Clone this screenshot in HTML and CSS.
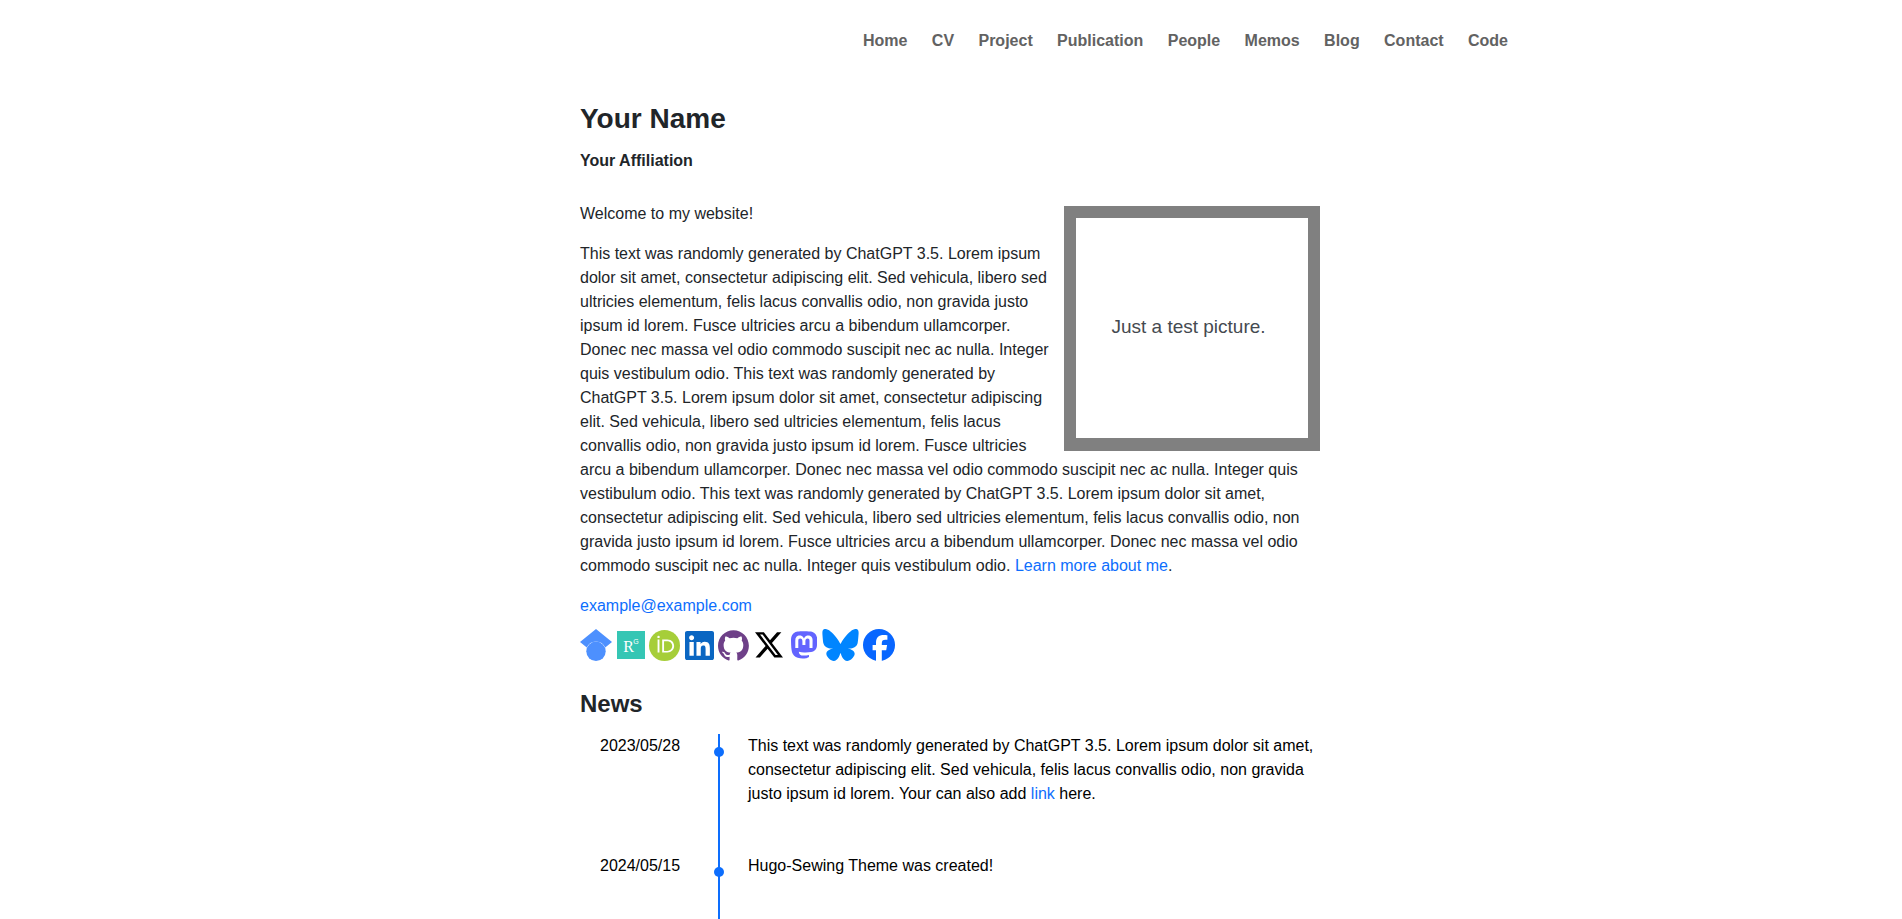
FILE: index.html
```html
<!DOCTYPE html>
<html lang="en">
<head>
<meta charset="utf-8">
<title>Your Name</title>
<link rel="stylesheet" href="styles.css">
</head>
<body>
<nav class="nav">
  <a href="#">Home</a><a href="#">CV</a><a href="#">Project</a><a href="#">Publication</a><a href="#">People</a><a href="#">Memos</a><a href="#">Blog</a><a href="#">Contact</a><a href="#">Code</a>
</nav>
<main class="content">
  <h1 class="name">Your Name</h1>
  <p class="affiliation">Your Affiliation</p>
  <section class="intro">
    <div class="picture">Just a test picture.</div>
    <p>Welcome to my website!</p>
    <p>This text was randomly generated by ChatGPT 3.5. Lorem ipsum dolor sit amet, consectetur adipiscing elit. Sed vehicula, libero sed ultricies elementum, felis lacus convallis odio, non gravida justo ipsum id lorem. Fusce ultricies arcu a bibendum ullamcorper. Donec nec massa vel odio commodo suscipit nec ac nulla. Integer quis vestibulum odio. This text was randomly generated by ChatGPT 3.5. Lorem ipsum dolor sit amet, consectetur adipiscing elit. Sed vehicula, libero sed ultricies elementum, felis lacus convallis odio, non gravida justo ipsum id lorem. Fusce ultricies arcu a bibendum ullamcorper. Donec nec massa vel odio commodo suscipit nec ac nulla. Integer quis vestibulum odio. This text was randomly generated by ChatGPT 3.5. Lorem ipsum dolor sit amet, consectetur adipiscing elit. Sed vehicula, libero sed ultricies elementum, felis lacus convallis odio, non gravida justo ipsum id lorem. Fusce ultricies arcu a bibendum ullamcorper. Donec nec massa vel odio commodo suscipit nec ac nulla. Integer quis vestibulum odio. <a href="#">Learn more about me</a>.</p>
  </section>
  <a class="email" href="#">example@example.com</a>
  <div class="social">
    <svg class="scholar" viewBox="0 0 32 32"><path fill="#4d90fe" d="M16 0 0 13l6.800 5.500a10 10 0 0 1 18.400 0L32 13z"/><circle cx="16" cy="22.300" r="9.700" fill="#4d90fe"/></svg>
    <svg class="gate" viewBox="0 0 28 28"><path fill="#35c6b4" d="M0 0h28v28H0z"/><text x="6.300" y="21.200" font-size="16" fill="#fff">R</text><text class="g" x="16.300" y="12.600" font-size="7" fill="#fff">G</text></svg>
    <svg class="orcid" viewBox="0 0 256 256"><circle cx="128" cy="128" r="128" fill="#a6ce39"/><path fill="#fff" d="M70.900 79.100h15.400v107.100H70.900zM108.900 79.100h41.600c39.600 0 57 28.300 57 53.600 0 27.500-21.500 53.600-56.800 53.600h-41.800zm15.400 93.300h24.500c34.900 0 42.900-26.500 42.900-39.700 0-21.500-13.700-39.700-43.700-39.700h-23.700z"/><circle cx="78.600" cy="56.800" r="10.100" fill="#fff"/></svg>
    <svg class="linkedin" viewBox="0 0 448 448"><path fill="#0a66c2" d="M416 0H31.900C14.300 0 0 14.500 0 32.300v383.400C0 433.500 14.300 448 31.900 448H416c17.600 0 32-14.500 32-32.300V32.300C448 14.500 433.600 0 416 0zM135.400 384H69V170.200h66.500V384zm-33.200-243c-21.300 0-38.500-17.300-38.500-38.500S80.900 64 102.200 64c21.200 0 38.500 17.300 38.500 38.500 0 21.300-17.200 38.500-38.500 38.500zm282.100 243h-66.400V280c0-24.800-.5-56.700-34.500-56.700-34.600 0-39.900 27-39.900 54.900V384h-66.400V170.200h63.700v29.200h.9c8.900-16.800 30.600-34.500 62.900-34.500 67.200 0 79.700 44.300 79.700 101.900z"/></svg>
    <svg class="github" viewBox="0 0 98 97"><path fill="#6e4088" d="M48.854 0C21.839 0 0 22 0 49.217c0 21.756 13.993 40.172 33.405 46.690 2.427.490 3.316-1.059 3.316-2.362 0-1.141-.080-5.052-.080-9.127-13.590 2.934-16.420-5.867-16.420-5.867-2.184-5.704-5.420-7.170-5.420-7.170-4.448-3.015.324-3.015.324-3.015 4.934.326 7.523 5.052 7.523 5.052 4.367 7.496 11.404 5.378 14.235 4.074.404-3.178 1.699-5.378 3.074-6.600-10.839-1.141-22.243-5.378-22.243-24.283 0-5.378 1.940-9.778 5.014-13.200-.485-1.222-2.184-6.275.486-13.038 0 0 4.125-1.304 13.426 5.052a46.970 46.970 0 0 1 12.214-1.630c4.125 0 8.330.571 12.213 1.630 9.302-6.356 13.427-5.052 13.427-5.052 2.670 6.763.970 11.816.485 13.038 3.155 3.422 5.015 7.822 5.015 13.200 0 18.905-11.404 23.060-22.324 24.283 1.780 1.548 3.316 4.481 3.316 9.126 0 6.600-.080 11.897-.080 13.526 0 1.304.890 2.853 3.316 2.364 19.412-6.520 33.405-24.935 33.405-46.691C97.707 22 75.788 0 48.854 0z"/></svg>
    <svg class="x" viewBox="0 0 24 22"><path d="M18.901 0h3.680l-8.040 9.190L24 21.693h-7.406l-5.800-7.584-6.638 7.584H.474l8.600-9.830L0 0h7.594l5.243 6.932zM17.610 19.491h2.039L6.486 2.087H4.298z"/></svg>
    <svg class="mastodon" viewBox="0 0 74 79"><path fill="#6364ff" d="M73.701 17.432C72.562 9.051 65.177 2.447 56.424 1.167 54.947.950 49.351.160 36.389.160h-.097c-12.967 0-15.749.790-17.226 1.007C10.557 2.411 2.787 8.349.902 16.827-.004 21.002-.101 25.631.067 29.877c.239 6.089.285 12.168.844 18.232a85.600 85.600 0 0 0 2.023 11.965c1.797 7.284 9.072 13.346 16.199 15.826a43.900 43.900 0 0 0 23.694 1.236 34 34 0 0 0 2.574-.7c1.917-.603 4.166-1.277 5.819-2.463v-6.150a68 68 0 0 1-15.681 1.818c-9.089 0-11.533-4.262-12.233-6.036a18.700 18.700 0 0 1-1.064-4.760 66.700 66.700 0 0 0 15.424 1.804c1.251 0 2.498 0 3.749-.032 5.231-.146 10.744-.409 15.890-1.403 8.117-1.540 15.842-6.374 16.627-18.613.029-.482.103-5.048.103-5.548.003-1.700.553-12.057-.081-18.421zM61.209 47.968h-8.536V27.271c0-4.357-1.833-6.579-5.562-6.579-4.098 0-6.151 2.625-6.151 7.809v11.310h-8.483v-11.310c0-5.184-2.056-7.809-6.155-7.809-3.707 0-5.559 2.222-5.561 6.579v20.697h-8.528V26.642c0-4.357 1.128-7.818 3.384-10.384 2.328-2.569 5.380-3.887 9.172-3.887 4.387 0 7.703 1.669 9.913 5.004l2.134 3.544 2.137-3.544c2.210-3.335 5.526-5.004 9.907-5.004 3.788 0 6.840 1.318 9.174 3.887 2.256 2.563 3.384 6.024 3.384 10.384z"/></svg>
    <svg class="bluesky" viewBox="10 0 580 512"><path fill="#0085ff" d="M135.720 34.030C202.216 83.951 273.740 185.170 300 239.490c26.262-54.316 97.782-155.540 164.280-205.460C512.260-1.991 590-29.862 590 58.825c0 17.712-10.155 148.790-16.111 170.070-20.703 73.984-96.144 92.854-163.250 81.433 117.300 19.964 147.140 86.092 82.697 152.220-122.390 125.590-175.910-31.511-189.630-71.766-2.514-7.380-3.690-10.832-3.708-7.896-.017-2.936-1.193.516-3.707 7.896-13.714 40.255-67.233 197.360-189.630 71.766-64.444-66.128-34.605-132.260 82.697-152.220-67.108 11.421-142.550-7.449-163.250-81.433C20.150 207.610 9.997 76.535 9.997 58.825c0-88.687 77.742-60.816 125.720-24.795z"/></svg>
    <svg class="facebook" viewBox="0 0 32 32"><circle cx="16" cy="16" r="16" fill="#0866ff"/><path fill="#fff" d="M13 32V21.200H9.600V16H13v-2.100c0-5.500 2.500-8 7.900-8 1 0 2.800.2 3.500.4v4.500c-.4 0-1.100-.1-1.900-.1-2.700 0-3.700 1-3.700 3.700V16h5.300l-.9 5.200h-4.400V32z"/></svg>
  </div>
  <h2 class="news">News</h2>
  <div class="timeline">
    <div class="item"><time>2023/05/28</time><div class="text">This text was randomly generated by ChatGPT 3.5. Lorem ipsum dolor sit amet, consectetur adipiscing elit. Sed vehicula, felis lacus convallis odio, non gravida justo ipsum id lorem. Your can also add <a href="#">link</a> here.</div></div>
    <div class="item"><time>2024/05/15</time><div class="text">Hugo-Sewing Theme was created!</div></div>
  </div>
</main>
</body>
</html>
```

FILE: styles.css
```css
* { box-sizing: border-box; }
body {
  margin: 0;
  background: #fff;
  color: #212529;
  font: 16px/24px "Liberation Sans", Arial, sans-serif;
}
a { color: #0d6efd; text-decoration: none; }
.nav {
  display: flex;
  justify-content: flex-end;
  gap: 24.4px;
  width: 1114px;
  margin: 0 auto;
  padding-top: 29px;
}
.nav a { color: #626262; font-weight: bold; }
.content { width: 740px; margin: 0 auto 0 580px; }
.name { margin: 49px 0 0; font-size: 28px; line-height: 34px; }
.affiliation { margin: 13px 0 29px; font-weight: bold; }
.intro { display: flow-root; }
.intro p { margin: 0 0 16px; }
.picture {
  float: right;
  display: flex;
  align-items: center;
  justify-content: center;
  width: 256px;
  height: 245px;
  margin: 4px 0 0 10px;
  padding: 0 7px 3px 0;
  border: 12px solid #808080;
  border-bottom-width: 13px;
  font-size: 19px;
  color: #454a50;
}
.email { display: block; }
.social { display: flex; align-items: center; height: 32px; margin-top: 11px; }
.social svg { display: block; flex: none; }
.gate text { font-family: "Liberation Serif", serif; }
.gate .g { font-family: "Liberation Sans", sans-serif; }
.scholar { width: 32px; height: 32px; }
.gate { width: 28px; height: 28px; margin-left: 5px; }
.orcid { width: 31px; height: 31px; margin-left: 4px; }
.linkedin { width: 29px; height: 29px; margin-left: 5px; }
.github { width: 31px; height: 31px; margin-left: 4px; }
.x { width: 28px; height: 26px; margin-left: 6px; }
.mastodon { width: 26px; height: 28px; margin-left: 8px; }
.bluesky { width: 37px; height: 32px; margin-left: 5px; }
.facebook { width: 32px; height: 32px; margin-left: 4px; }
.news { margin: 28px 0 16px; font-size: 24px; line-height: 29px; }
.timeline { color: #000; }
.item {
  position: relative;
  display: grid;
  grid-template-columns: 118px 1fr;
  height: 120px;
  padding-left: 20px;
}
.item:last-child { height: 65px; }
.item .text { padding-left: 28px; border-left: 2px solid #0d6efd; }
.item::before {
  content: "";
  position: absolute;
  left: 134px;
  top: 13px;
  width: 10px;
  height: 10px;
  border-radius: 50%;
  background: #0d6efd;
}
```
